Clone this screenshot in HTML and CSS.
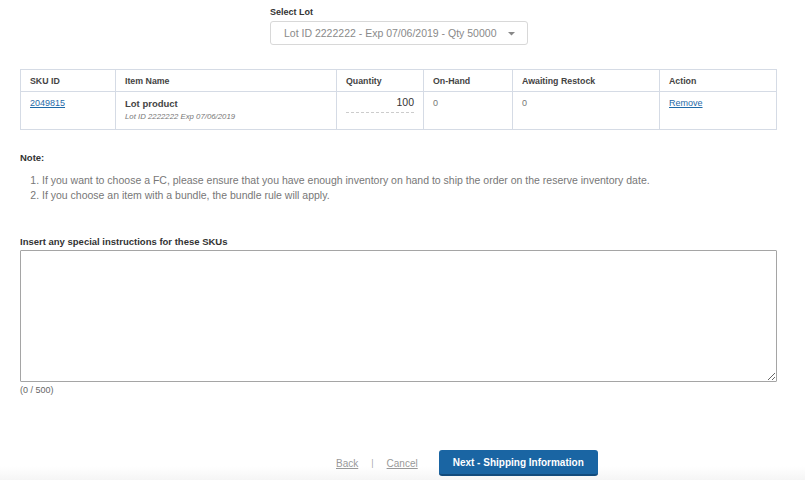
FILE: index.html
```html
<!DOCTYPE html>
<html>
<head>
<meta charset="utf-8">
<link rel="stylesheet" href="styles.css">
</head>
<body>
<div class="page">
  <div class="lot">
    <div class="lot-label">Select Lot</div>
    <div class="select">
      <span>Lot ID 2222222 - Exp 07/06/2019 - Qty 50000</span>
      <svg class="caret" width="7" height="4" viewBox="0 0 7 4"><path d="M0 0 L7 0 L3.5 3.5 Z" fill="#888"/></svg>
    </div>
  </div>

  <table class="grid">
    <colgroup>
      <col style="width:95px"><col style="width:221px"><col style="width:87px"><col style="width:89px"><col style="width:147px"><col>
    </colgroup>
    <thead>
      <tr><th>SKU ID</th><th>Item Name</th><th>Quantity</th><th>On-Hand</th><th>Awaiting Restock</th><th>Action</th></tr>
    </thead>
    <tbody>
      <tr>
        <td><a href="#" class="link">2049815</a></td>
        <td><div class="pname">Lot product</div><div class="psub">Lot ID 2222222 Exp 07/06/2019</div></td>
        <td><div class="qty">100</div></td>
        <td class="muted">0</td>
        <td class="muted">0</td>
        <td><a href="#" class="link">Remove</a></td>
      </tr>
    </tbody>
  </table>

  <div class="note">
    <div class="note-title">Note:</div>
    <ol>
      <li>If you want to choose a FC, please ensure that you have enough inventory on hand to ship the order on the reserve inventory date.</li>
      <li>If you choose an item with a bundle, the bundle rule will apply.</li>
    </ol>
  </div>

  <div class="instr">
    <div class="instr-label">Insert any special instructions for these SKUs</div>
    <textarea class="area"></textarea>
    <div class="count">(0 / 500)</div>
  </div>

  <div class="footer">
    <a href="#" class="flink">Back</a>
    <span class="sep">|</span>
    <a href="#" class="flink">Cancel</a>
    <button class="next">Next - Shipping Information</button>
  </div>
</div>
</body>
</html>
```
FILE: styles.css
```css
* { box-sizing: border-box; }
html, body { margin: 0; padding: 0; background: #fff; }
body { font-family: "Liberation Sans", Arial, sans-serif; color: #333; }
.page { width: 805px; height: 496px; padding: 0 28px 0 20px; display: flex; flex-direction: column; }

.lot { margin: 6px 0 0 250px; }
.lot-label { font-size: 9px; font-weight: bold; color: #333; height: 15px; line-height: 12px; }
.select { width: 258px; height: 24px; border: 1px solid #d8d8d8; border-radius: 3px; display: flex; align-items: center; padding: 0 12px 0 13px; justify-content: space-between; font-size: 10.5px; color: #8a8a8a; }
.caret { margin-top: 2px; }

.grid { margin-top: 24px; width: 757px; border-collapse: collapse; table-layout: fixed; font-size: 8.8px; }
.grid th { text-align: left; font-weight: bold; color: #444; height: 22px; padding: 0 9px; border: 1px solid #d5dbe5; }
.grid td { vertical-align: top; padding: 6px 9px 0; height: 38px; border: 1px solid #d5dbe5; font-size: 9px; }
.link { color: #1f6aa8; text-decoration: underline; font-size: 9px; }
.pname { font-weight: bold; font-size: 9.5px; color: #444; }
.psub { font-style: italic; font-size: 7.8px; color: #777; margin-top: 3px; }
.qty { text-align: right; font-size: 10.5px; color: #333; border-bottom: 1px dashed #ccc; height: 17px; margin-top: -2px; }
.muted { color: #777; }

.note { margin-top: 22px; }
.note-title { font-weight: bold; font-size: 9.5px; color: #333; }
.note ol { margin: 10px 0 0; padding-left: 22px; font-size: 10.5px; color: #777; line-height: 15px; }

.instr { margin-top: 33px; }
.instr-label { font-weight: bold; font-size: 9.5px; color: #333; }
.area { display: block; width: 757px; height: 132px; margin-top: 3px; border: 1px solid #a5a5a5; border-radius: 1px; resize: vertical; }
.count { font-size: 9px; color: #666; margin-top: 3px; }

.footer { margin: 51px -28px 0 -20px; height: 34px; display: flex; align-items: center; padding-left: 336px; background: linear-gradient(to bottom, #fff 60%, #f5f5f5 100%); }
.flink { font-size: 10px; color: #999; text-decoration: underline; }
.sep { font-size: 9px; color: #aaa; margin: 0 13px; }
.next { margin-left: 21px; height: 26px; width: 159px; background: #1a65a3; color: #fff; border: none; border-bottom: 2px solid #124b7c; border-radius: 3px; font-family: "Liberation Sans", Arial, sans-serif; font-weight: bold; font-size: 10px; }
```
